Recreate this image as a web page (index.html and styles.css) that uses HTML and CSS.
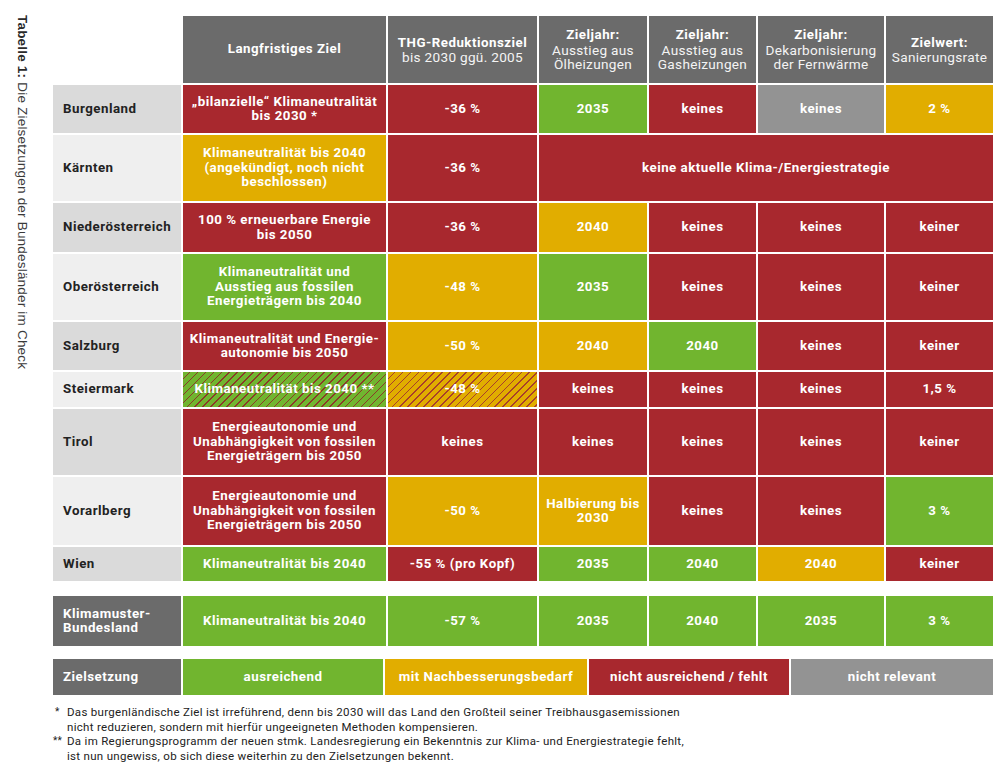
FILE: index.html
```html
<!DOCTYPE html>
<html lang="de">
<head>
<meta charset="utf-8">
<title>Tabelle 1: Die Zielsetzungen der Bundesländer im Check</title>
<link rel="stylesheet" href="styles.css">
</head>
<body>
<div class="page">
  <aside class="caption"><span class="caption-text"><b>Tabelle 1:</b> Die Zielsetzungen der Bundesländer im Check</span></aside>
  <main class="content">
    <div class="grid main-grid">
      <div class="blank"></div>
      <div class="cell head"><b>Langfristiges Ziel</b></div>
      <div class="cell head"><span><b>THG-Reduktionsziel</b><br>bis 2030 ggü. 2005</span></div>
      <div class="cell head"><span><b>Zieljahr:</b><br>Ausstieg aus<br>Ölheizungen</span></div>
      <div class="cell head"><span><b>Zieljahr:</b><br>Ausstieg aus<br>Gasheizungen</span></div>
      <div class="cell head"><span><b>Zieljahr:</b><br>Dekarbonisierung<br>der Fernwärme</span></div>
      <div class="cell head"><span><b>Zielwert:</b><br>Sanierungsrate</span></div>

      <div class="land dark">Burgenland</div>
      <div class="cell red">„bilanzielle“ Klimaneutralität<br>bis 2030 *</div>
      <div class="cell red">-36 %</div>
      <div class="cell green">2035</div>
      <div class="cell red">keines</div>
      <div class="cell grey">keines</div>
      <div class="cell yellow">2 %</div>

      <div class="land light">Kärnten</div>
      <div class="cell yellow">Klimaneutralität bis 2040<br>(angekündigt, noch nicht<br>beschlossen)</div>
      <div class="cell red">-36 %</div>
      <div class="cell red span4">keine aktuelle Klima-/Energiestrategie</div>

      <div class="land dark">Niederösterreich</div>
      <div class="cell red">100 % erneuerbare Energie<br>bis 2050</div>
      <div class="cell red">-36 %</div>
      <div class="cell yellow">2040</div>
      <div class="cell red">keines</div>
      <div class="cell red">keines</div>
      <div class="cell red">keiner</div>

      <div class="land light">Oberösterreich</div>
      <div class="cell green">Klimaneutralität und<br>Ausstieg aus fossilen<br>Energieträgern bis 2040</div>
      <div class="cell yellow">-48 %</div>
      <div class="cell green">2035</div>
      <div class="cell red">keines</div>
      <div class="cell red">keines</div>
      <div class="cell red">keiner</div>

      <div class="land dark">Salzburg</div>
      <div class="cell red">Klimaneutralität und Energie-<br>autonomie bis 2050</div>
      <div class="cell yellow">-50 %</div>
      <div class="cell yellow">2040</div>
      <div class="cell green">2040</div>
      <div class="cell red">keines</div>
      <div class="cell red">keiner</div>

      <div class="land light">Steiermark</div>
      <div class="cell green hatched">Klimaneutralität bis 2040 **</div>
      <div class="cell yellow hatched">-48 %</div>
      <div class="cell red">keines</div>
      <div class="cell red">keines</div>
      <div class="cell red">keines</div>
      <div class="cell red">1,5 %</div>

      <div class="land dark">Tirol</div>
      <div class="cell red">Energieautonomie und<br>Unabhängigkeit von fossilen<br>Energieträgern bis 2050</div>
      <div class="cell red">keines</div>
      <div class="cell red">keines</div>
      <div class="cell red">keines</div>
      <div class="cell red">keines</div>
      <div class="cell red">keiner</div>

      <div class="land light">Vorarlberg</div>
      <div class="cell red">Energieautonomie und<br>Unabhängigkeit von fossilen<br>Energieträgern bis 2050</div>
      <div class="cell yellow">-50 %</div>
      <div class="cell yellow">Halbierung bis<br>2030</div>
      <div class="cell red">keines</div>
      <div class="cell red">keines</div>
      <div class="cell green">3 %</div>

      <div class="land dark">Wien</div>
      <div class="cell green">Klimaneutralität bis 2040</div>
      <div class="cell red">-55 % (pro Kopf)</div>
      <div class="cell green">2035</div>
      <div class="cell green">2040</div>
      <div class="cell yellow">2040</div>
      <div class="cell red">keiner</div>
    </div>

    <div class="grid model-grid">
      <div class="land model">Klimamuster-<br>Bundesland</div>
      <div class="cell green">Klimaneutralität bis 2040</div>
      <div class="cell green">-57 %</div>
      <div class="cell green">2035</div>
      <div class="cell green">2040</div>
      <div class="cell green">2035</div>
      <div class="cell green">3 %</div>
    </div>

    <div class="legend">
      <div class="land model">Zielsetzung</div>
      <div class="cell green">ausreichend</div>
      <div class="cell yellow">mit Nachbesserungsbedarf</div>
      <div class="cell red">nicht ausreichend / fehlt</div>
      <div class="cell grey">nicht relevant</div>
    </div>

    <div class="notes">
      <span class="mark single">*</span>
      <p>Das burgenländische Ziel ist irreführend, denn bis 2030 will das Land den Großteil seiner Treibhausgasemissionen<br>nicht reduzieren, sondern mit hierfür ungeeigneten Methoden kompensieren.</p>
      <span class="mark">**</span>
      <p>Da im Regierungsprogramm der neuen stmk. Landesregierung ein Bekenntnis zur Klima- und Energiestrategie fehlt,<br>ist nun ungewiss, ob sich diese weiterhin zu den Zielsetzungen bekennt.</p>
    </div>
  </main>
</div>
</body>
</html>
```

FILE: styles.css
```css
* { box-sizing: border-box; }

html, body {
  margin: 0;
  padding: 0;
  background: #ffffff;
}

body {
  font-family: Roboto, "Liberation Sans", Arial, sans-serif;
  color: #222222;
}

.page {
  display: flex;
  align-items: flex-start;
  padding-top: 16px;
}

.caption {
  width: 53px;
  flex: none;
  display: flex;
  padding-left: 15px;
}

.caption-text {
  writing-mode: vertical-rl;
  font-family: "Liberation Sans", Arial, sans-serif;
  font-size: 13.5px;
  line-height: 15px;
  color: #3a3a3a;
  margin-top: -1px;
  letter-spacing: 0.2px;
}

.caption-text b {
  color: #2a2a2a;
}

.content {
  width: 940px;
  flex: none;
}

.grid {
  display: grid;
  grid-template-columns: 128px 203px 149px 108px 107px 126px 107px;
  gap: 2px;
}

.main-grid {
  grid-template-rows: 67px 48px 66px 49px 66px 48px 35px 66px 68px 34px;
}

.model-grid {
  margin-top: 15px;
  grid-template-rows: 50px;
}

.legend {
  margin-top: 13px;
  display: grid;
  grid-template-columns: 128px 200px 202px 200px 202px;
  grid-template-rows: 36px;
  gap: 2px;
}

.cell {
  display: flex;
  align-items: center;
  justify-content: center;
  text-align: center;
  color: #ffffff;
  font-size: 13.3px;
  font-weight: 700;
  line-height: 14.5px;
  letter-spacing: 0.5px;
  padding: 0 3px;
}

.head {
  background: #6b6b6b;
  font-weight: 400;
  font-size: 13.6px;
  color: #f4f4f4;
  letter-spacing: 0.3px;
}

.head b {
  font-weight: 700;
  font-size: 13.3px;
  color: #ffffff;
  letter-spacing: 0.5px;
}

.span4 {
  grid-column: span 4;
}

.red { background: #a8282e; }
.green { background: #71b52f; }
.yellow { background: #e1ad00; }
.grey { background: #939393; }

.hatched.green {
  background: repeating-linear-gradient(135deg, #71b52f 0 4.5px, #8a3a28 4.5px 5.6px);
}

.hatched.yellow {
  background: repeating-linear-gradient(135deg, #e1ad00 0 4.5px, #a8402a 4.5px 5.6px);
}

.land {
  display: flex;
  align-items: center;
  padding-left: 10px;
  font-size: 13.3px;
  font-weight: 700;
  line-height: 14.5px;
  letter-spacing: 0.5px;
  color: #222222;
}

.land.dark { background: #dadada; }
.land.light { background: #efefef; }

.land.model {
  background: #6b6b6b;
  color: #ffffff;
}

.notes {
  margin-top: 10px;
  display: grid;
  grid-template-columns: 14px 1fr;
  font-size: 11.5px;
  line-height: 14.5px;
  letter-spacing: 0.3px;
  color: #222222;
}

.notes p {
  margin: 0;
}

.mark {
  font-size: 10px;
}

.mark.single {
  padding-left: 2px;
}
```
